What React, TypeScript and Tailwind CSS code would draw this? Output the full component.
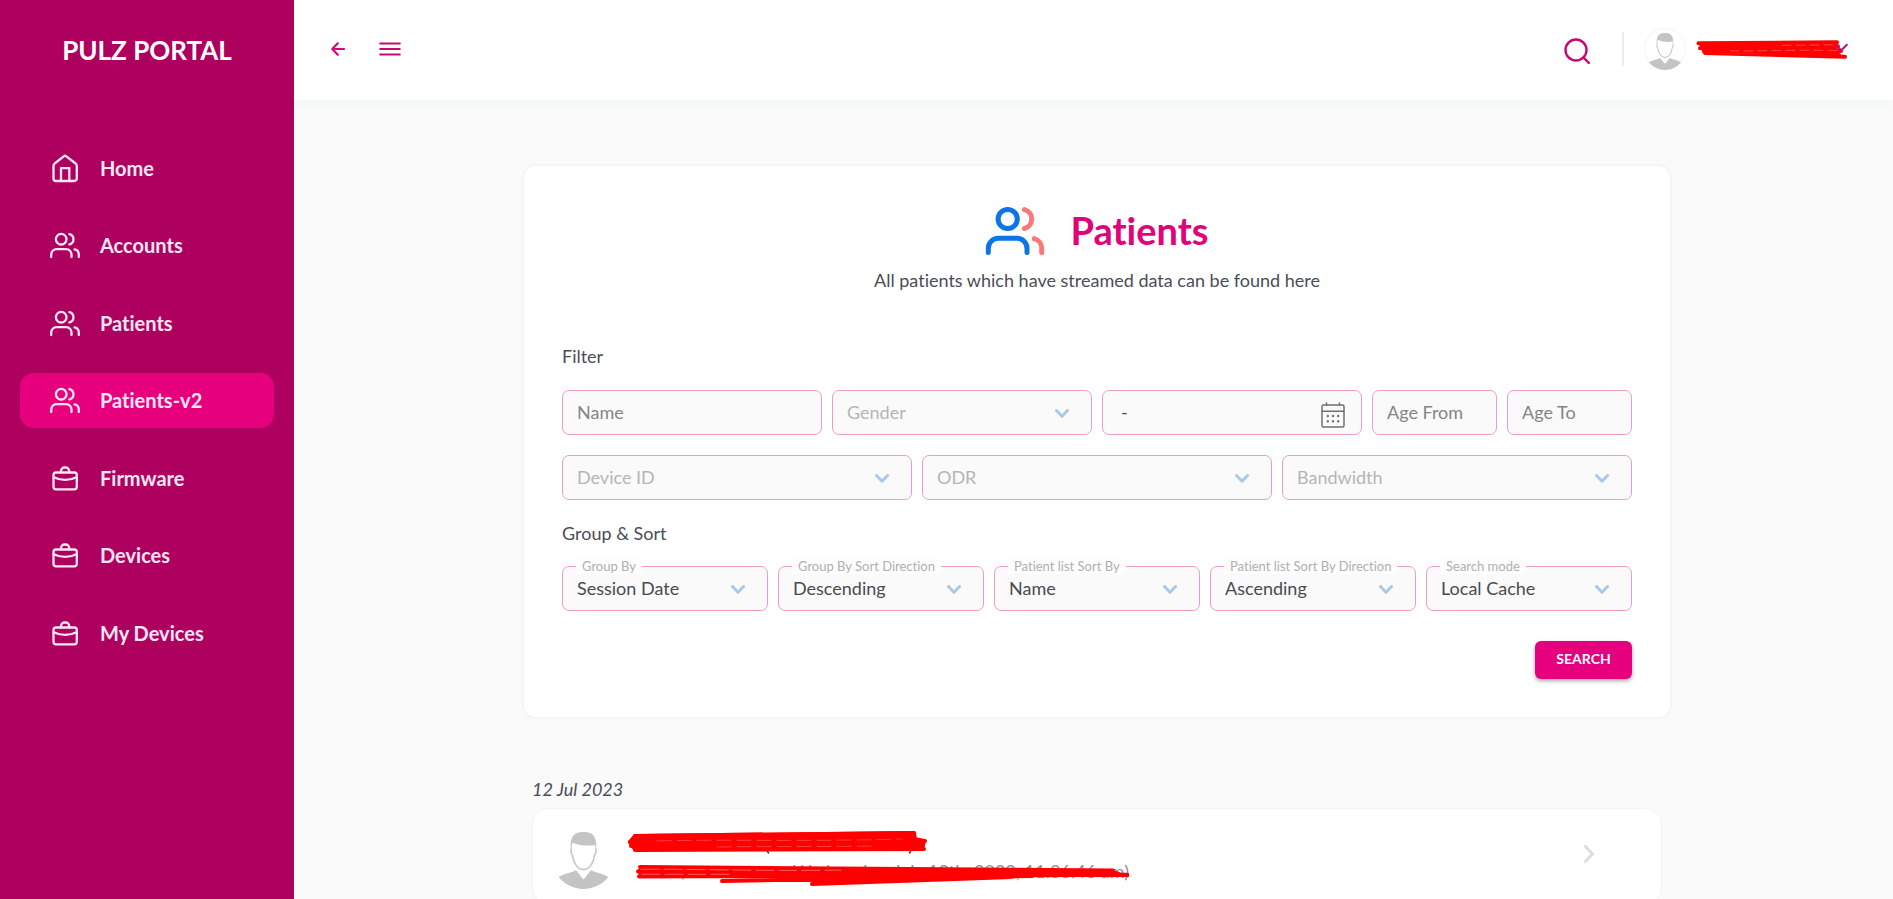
import { ReactNode } from 'react';

interface NavItem {
  label: string;
  icon: ReactNode;
  active?: boolean;
}

interface SelectFieldProps {
  id: string;
  label: string;
  value?: string;
}

function HomeIcon() {
  return (
    <svg viewBox="0 0 32 32" className="w-8 h-8" fill="none" stroke="currentColor" strokeWidth="2.3" strokeLinecap="round" strokeLinejoin="round">
      <path d="M15 4.2a1.6 1.6 0 0 1 2 0l9.6 7.3c.8.6 1.2 1.4 1.2 2.4v12.6a2.5 2.5 0 0 1-2.5 2.5H7a2.5 2.5 0 0 1-2.5-2.5V13.9c0-1 .5-1.8 1.2-2.4z" />
      <path d="M12 29V16.2h8.3V29" />
    </svg>
  );
}

function UsersIcon() {
  return (
    <svg viewBox="0 0 32 32" className="w-8 h-8" fill="none" stroke="currentColor" strokeWidth="2.3" strokeLinecap="round">
      <circle cx="12.2" cy="10.2" r="5.3" />
      <path d="M20.4 5.1a5.3 5.3 0 0 1 0 10.3" />
      <path d="M2.2 28v-2.5a5.3 5.3 0 0 1 5.3-5.3h9.7a5.3 5.3 0 0 1 5.3 5.3V28" />
      <path d="M25.6 20.4a5.3 5.3 0 0 1 4.2 5.2V28" />
    </svg>
  );
}

function CaseIcon() {
  return (
    <svg viewBox="0 0 32 32" className="w-8 h-8" fill="none" stroke="currentColor" strokeWidth="2.3" strokeLinecap="round">
      <rect x="4.5" y="10.5" width="23.3" height="16.8" rx="2.5" />
      <path d="M12 10.3V9a3.5 3.5 0 0 1 3.5-3.5h1.2A3.5 3.5 0 0 1 20.2 9v1.3" />
      <path d="M4.8 15.2c7 3.4 15.6 3.4 22.7 0" />
    </svg>
  );
}

function Avatar({ className, ring }: { className: string; ring?: boolean }) {
  return (
    <svg viewBox="0 0 82 82" className={className}>
      {ring && <circle cx="41" cy="41" r="40" fill="#fff" stroke="#f1f1f1" strokeWidth="1.5" />}
      <path d="M9.5 67c6-4 15-5 22-8.500 4 4.500 5 7 9.500 11.500 4.500-4.500 5.500-7 9.500-11.500 7 3.500 16 4.500 22 8.500C65 76 54 82 41 82S17 76 9.500 67z" fill="#c4c4c4" />
      <path d="M34 52v6l7 9 7-9v-6z" fill="#fff" />
      <path d="M26 31c-1.500 1-1 7 1 8 1 9 6 18.500 14 18.500S54 48 55 39c2-1 2.500-7 1-8" fill="#fff" stroke="#c4c4c4" strokeWidth="2" />
      <path d="M25 35c-1-16 1-25 16-25s17 9 16 25l-1.500-8.500C46 28 36 27 27 23.500z" fill="#c4c4c4" />
    </svg>
  );
}

function ChevronDown() {
  return (
    <svg viewBox="0 0 14 9" className="absolute right-[23px] top-[19px] w-[14px] h-[9px] pointer-events-none" fill="none" stroke="#a9c8ea" strokeWidth="3" strokeLinecap="round" strokeLinejoin="round">
      <path d="M1.5 1.500 7 7.200l5.500-5.700" />
    </svg>
  );
}

const fieldClass = 'w-full h-[45px] rounded-[7px] border border-[#f09cca] bg-[#fafafa] px-[14px] pb-[2px] text-lg outline-none';

function TextField({ label, className }: { label: string; className?: string }) {
  return (
    <div className={className}>
      <input type="text" aria-label={label} placeholder={label} className={`${fieldClass} placeholder:text-[#858585]`} />
    </div>
  );
}

function SelectField({ id, label, value }: SelectFieldProps) {
  return (
    <div className="relative">
      <select id={id} aria-label={label} className={`${fieldClass} appearance-none ${value ? 'text-[#4a4a4f]' : 'text-[#b5b5b5]'}`}>
        <option>{value ?? label}</option>
      </select>
      {value && (
        <label htmlFor={id} className="absolute left-[14px] -top-2 h-4 px-[6px] bg-[#fdfdfd] text-[13px] leading-4 text-[#b0b0b0] whitespace-nowrap">
          {label}
        </label>
      )}
      <ChevronDown />
    </div>
  );
}

const navItems: NavItem[] = [
  { label: 'Home', icon: <HomeIcon /> },
  { label: 'Accounts', icon: <UsersIcon /> },
  { label: 'Patients', icon: <UsersIcon /> },
  { label: 'Patients-v2', icon: <UsersIcon />, active: true },
  { label: 'Firmware', icon: <CaseIcon /> },
  { label: 'Devices', icon: <CaseIcon /> },
  { label: 'My Devices', icon: <CaseIcon /> },
];

const sortFields = [
  { id: 'group-by', label: 'Group By', value: 'Session Date' },
  { id: 'group-dir', label: 'Group By Sort Direction', value: 'Descending' },
  { id: 'list-sort', label: 'Patient list Sort By', value: 'Name' },
  { id: 'list-dir', label: 'Patient list Sort By Direction', value: 'Ascending' },
  { id: 'mode', label: 'Search mode', value: 'Local Cache' },
];

function Sidebar() {
  return (
    <aside className="relative z-10 w-[294px] shrink-0 bg-[#ae005f] text-white">
      <div className="h-[100px] flex items-center justify-center text-[26px] font-bold">PULZ PORTAL</div>
      <nav className="mt-10 px-5">
        <ul className="h-[520px] flex flex-col justify-between">
          {navItems.map((item) => (
            <li key={item.label}>
              <a
                href="#"
                className={`h-[55px] pl-[29px] flex items-center gap-[19px] rounded-[14px] text-xl font-bold text-[#ffe6f4] ${
                  item.active ? 'bg-[#e6007e]' : ''
                }`}
              >
                {item.icon}
                {item.label}
              </a>
            </li>
          ))}
        </ul>
      </nav>
    </aside>
  );
}

function Header() {
  return (
    <header className="h-[100px] shrink-0 bg-white flex items-center justify-between pb-[2px] pl-[37px] pr-[45px] shadow-[0_6px_6px_#f6f7f9]">
      <div className="flex items-center gap-[34px] text-[#d6087a]">
        <button aria-label="Back">
          <svg viewBox="0 0 14 14" className="w-[14px] h-[14px]" fill="none" stroke="currentColor" strokeWidth="2.200" strokeLinecap="round" strokeLinejoin="round">
            <path d="M13 7H1.500M6.800 1.300 1.300 7l5.500 5.700" />
          </svg>
        </button>
        <button aria-label="Toggle menu">
          <svg viewBox="0 0 22 14" className="w-[22px] h-[14px]" fill="none" stroke="#c50a6e" strokeWidth="2" strokeLinecap="round">
            <path d="M1.200 1.500h19.600M1.200 7h19.600M1.200 12.500h19.600" />
          </svg>
        </button>
      </div>
      <div className="flex items-center">
        <button aria-label="Search" className="mt-1">
          <svg viewBox="0 0 26 26" className="w-[26px] h-[26px]" fill="none" stroke="#c9086f" strokeWidth="2.400" strokeLinecap="round">
            <circle cx="12" cy="12" r="10.500" />
            <path d="m19.500 19.500 5.300 5.300" />
          </svg>
        </button>
        <span className="ml-8 w-[2px] h-[34px] bg-[#ececec]" />
        <button aria-label="Account menu" className="ml-5 flex items-center gap-[10px]">
          <Avatar ring className="w-[42px] h-[42px]" />
          <svg viewBox="0 0 152 24" className="w-[152px] h-6" fill="none" strokeLinecap="round" strokeLinejoin="round">
            <path d="M3 6.300 141 5l1 9.500 4 4L8 15.500 4 11z" fill="#f00" />
            <path d="M2.500 6.300 141 5.300M4 11.300l138-2M8 14.500l137-.5M9 16l140 3.700" stroke="#f00" strokeWidth="4" />
            <path d="M34 13.800c30 .8 62-1.400 108-.2M86 8.300l54-.5" stroke="#ff8a8a" strokeWidth=".5" strokeDasharray="9 5" />
            <path d="m141 9.300 4.300 4 5.500-5.500" stroke="#b8127e" strokeWidth="2" />
          </svg>
        </button>
      </div>
    </header>
  );
}

function FilterCard() {
  return (
    <section className="rounded-[14px] border-2 border-[#f5f5f5] bg-white px-[38px] pt-10 pb-[38px]">
      <div className="flex items-center justify-center gap-[25px]">
        <svg viewBox="0 0 60 50" className="w-[60px] h-[50px]" fill="none" strokeWidth="5" strokeLinecap="round">
          <g stroke="#0d75e6">
            <circle cx="22.700" cy="13" r="9.600" />
            <path d="M3.300 46.500V42.300a10 10 0 0 1 10-10H32a10 10 0 0 1 10 10v4.200" />
          </g>
          <g stroke="#fc7777">
            <path d="M39.500 3.600a9.800 9.800 0 0 1 0 18.900" />
            <path d="M49.300 32.600a10 10 0 0 1 7.400 9.700v4.200" />
          </g>
        </svg>
        <h1 className="pb-[2px] text-[38px] leading-[48px] font-bold text-[#e0047b]">Patients</h1>
      </div>
      <p className="mt-3 text-lg leading-6 text-center">All patients which have streamed data can be found here</p>

      <form onSubmit={(e) => e.preventDefault()}>
        <h2 className="mt-[52px] text-lg leading-6">Filter</h2>
        <div className="mt-[22px] grid grid-cols-8 gap-[10px]">
          <TextField label="Name" className="col-span-2" />
          <div className="col-span-2">
            <SelectField id="gender" label="Gender" />
          </div>
          <div className="relative col-span-2">
            <input type="text" aria-label="Date range" defaultValue="-" className={`${fieldClass} pl-[18px]`} />
            <svg viewBox="0 0 24 26" className="absolute right-[17px] top-3 w-6 h-[26px]" fill="none" stroke="#707070" strokeWidth="1.500" strokeLinecap="round">
              <rect x="1" y="3" width="22" height="22" rx="1.500" />
              <path d="M1 9.300h22M5.500 1v2M18.500 1v2" />
              <path d="M6.800 14h.01M12 14h.01M17.200 14h.01M6.800 19.300h.01M12 19.300h.01M17.200 19.300h.01" strokeWidth="2.400" />
            </svg>
          </div>
          <TextField label="Age From" />
          <TextField label="Age To" />
        </div>
        <div className="mt-5 grid grid-cols-3 gap-[10px]">
          <SelectField id="device" label="Device ID" />
          <SelectField id="odr" label="ODR" />
          <SelectField id="bandwidth" label="Bandwidth" />
        </div>

        <h2 className="mt-[21px] text-lg leading-6">Group &amp; Sort</h2>
        <div className="mt-[21px] grid grid-cols-5 gap-[10px]">
          {sortFields.map((field) => (
            <SelectField key={field.id} {...field} />
          ))}
        </div>
        <div className="mt-[30px] flex justify-end">
          <button type="submit" className="h-[38px] w-[97px] pb-[2px] rounded-[6px] bg-[#e6007e] text-sm font-bold text-white shadow-[0_2px_4px_rgba(0,0,0,0.35)]">
            SEARCH
          </button>
        </div>
      </form>
    </section>
  );
}

function PatientRow() {
  return (
    <a href="#" className="mt-[7px] h-24 flex items-center rounded-[16px] border border-[#f3f3f3] bg-white pl-[18px] pr-[66px]">
      <Avatar className="w-[65px] h-[65px]" />
      <div className="relative ml-[11px] w-[502px] h-[60px]">
        <p className="pt-[33px] text-right text-lg leading-6 text-[#8f8f8f]">Wednesday, July 12th, 2023, 11:36:46 am)</p>
        {/* crossed out name and session line */}
        <svg viewBox="0 0 502 60" className="absolute inset-0 w-full h-full" fill="none" stroke="#f00" strokeWidth="4" strokeLinecap="round" strokeLinejoin="round">
          <path d="m139 23 2.500 4M285 23l-2.500 4" stroke="#444" strokeWidth="1.500" />
          <path d="m54 49 2 4" stroke="#999" strokeWidth="1.500" />
          <path d="M8 10 287 7l1 6 9 2-2 8H8l-5-7z" fill="#f00" />
          <path d="m8 10 279-3M3 16l295-1M4 20l291-1M8 24l289-1" />
          <path d="M30 15c70-2 130 1 245-2M90 21c60-1 120 0 160-1" stroke="#ff7a7a" strokeWidth=".5" strokeDasharray="14 6" />
          <path d="M11 43 489 45l11 4-120 2-195 5 100-4H100l-88-3-2-4z" fill="#f00" stroke="none" />
          <path d="m13 41 473 3.500M11 45.500l490 3.500M12 50.500l488-1.700M95 55l310-5M185 58l200-7" />
          <path d="M14 43.300c60-.5 110 2 200 .8M15 48.300h90" stroke="#ff9a9a" strokeWidth=".6" strokeDasharray="18 5" />
        </svg>
      </div>
      <svg viewBox="0 0 12 20" className="ml-auto mb-1 w-3 h-5" fill="none" stroke="#dcdcdc" strokeWidth="2.800">
        <path d="m1.500 1.500 8 8.500-8 8.500" />
      </svg>
    </a>
  );
}

export default function App() {
  return (
    <div className="h-screen flex overflow-hidden bg-[#fafafa] font-['Lato',sans-serif] text-[#4a4d57] [font-variant-ligatures:none]">
      <Sidebar />
      <div className="flex-1 min-w-0 flex flex-col">
        <Header />
        <main className="flex-1 min-h-0 overflow-hidden pt-16 pl-[7px]">
          <div className="max-w-[1150px] mx-auto">
            <FilterCard />
            <div className="mt-[58px] px-[10px]">
              <h2 className="text-lg leading-6 italic">12 Jul 2023</h2>
              <PatientRow />
            </div>
          </div>
        </main>
      </div>
    </div>
  );
}
